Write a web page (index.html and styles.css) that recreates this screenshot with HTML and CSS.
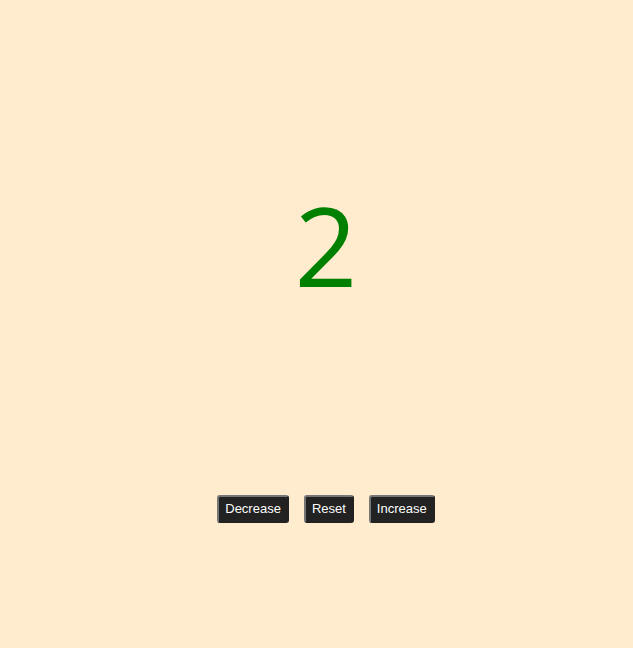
FILE: index.html
```html
<!DOCTYPE html>
<html>
<head>
<meta charset="utf-8">
<link rel="stylesheet" href="styles.css">
</head>
<body>
<main class="counter">
  <div class="count">2</div>
  <div class="controls">
    <button class="btn">Decrease</button>
    <button class="btn">Reset</button>
    <button class="btn">Increase</button>
  </div>
</main>
</body>
</html>
```
FILE: styles.css
```css
html, body {
  margin: 0;
  background: #ffebcd;
  height: 100%;
}
.counter {
  display: flex;
  flex-direction: column;
  align-items: center;
  padding-left: 19px;
  padding-top: 169px;
}
.count {
  font-family: "Open Sans", sans-serif;
  font-size: 110px;
  line-height: 150px;
  color: #008000;
}
.controls {
  display: flex;
  gap: 15px;
  margin-top: 176px;
}
.btn {
  font-family: "Liberation Sans", Arial, sans-serif;
  font-size: 13px;
  line-height: 16px;
  padding: 4px 6px;
  color: #ffffff;
  background: #222222;
  border: 2px outset #767676;
  border-radius: 3px;
}
```
